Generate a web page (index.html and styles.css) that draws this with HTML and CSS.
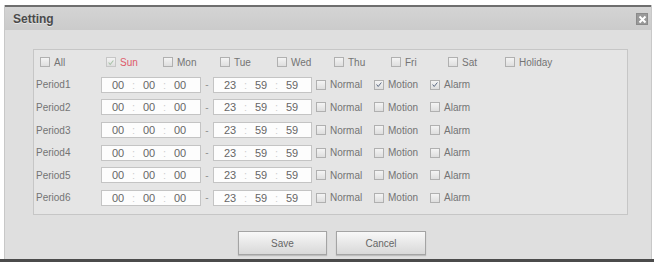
FILE: index.html
```html
<!DOCTYPE html>
<html lang="en">
<head>
    <meta charset="UTF-8">
    <title>Setting</title>
    <link rel="stylesheet" href="styles.css">
</head>
<body>

    <div class="top-strip"></div>

    <!-- Setting dialog -->
    <div class="dialog">
        <div class="dialog-head">
            <span class="dialog-title">Setting</span>
            <span class="dialog-close">
                <svg width="9" height="9" viewBox="0 0 9 9"><path d="M1.5 1.5 L7.5 7.5 M7.5 1.5 L1.5 7.5" stroke="#fff" stroke-width="2"/></svg>
            </span>
        </div>

        <div class="dialog-body">
            <div class="period-box">
                <div class="row days">
                    <label class="chk-item day all"><span class="chk"></span>All</label>
                    <label class="chk-item day sun"><span class="chk checked light"><svg viewBox="0 0 10 10"><path d="M2 5 L4 7.5 L8 2.5" fill="none" stroke="#a6c0a6" stroke-width="1.3"/></svg></span>Sun</label>
                    <label class="chk-item day"><span class="chk"></span>Mon</label>
                    <label class="chk-item day"><span class="chk"></span>Tue</label>
                    <label class="chk-item day"><span class="chk"></span>Wed</label>
                    <label class="chk-item day"><span class="chk"></span>Thu</label>
                    <label class="chk-item day"><span class="chk"></span>Fri</label>
                    <label class="chk-item day"><span class="chk"></span>Sat</label>
                    <label class="chk-item day"><span class="chk"></span>Holiday</label>
                </div>

                <div class="row period">
                    <span class="period-name">Period1</span>
                    <div class="time-box"><span class="seg">00</span><span class="colon">:</span><span class="seg">00</span><span class="colon">:</span><span class="seg">00</span></div>
                    <span class="dash">-</span>
                    <div class="time-box"><span class="seg">23</span><span class="colon">:</span><span class="seg">59</span><span class="colon">:</span><span class="seg">59</span></div>
                    <label class="chk-item normal"><span class="chk"></span>Normal</label>
                    <label class="chk-item motion"><span class="chk checked"><svg viewBox="0 0 10 10"><path d="M2 5 L4 7.5 L8 2.5" fill="none" stroke="#55647e" stroke-width="1.2"/></svg></span>Motion</label>
                    <label class="chk-item"><span class="chk checked"><svg viewBox="0 0 10 10"><path d="M2 5 L4 7.5 L8 2.5" fill="none" stroke="#55647e" stroke-width="1.2"/></svg></span>Alarm</label>
                </div>

                <div class="row period">
                    <span class="period-name">Period2</span>
                    <div class="time-box"><span class="seg">00</span><span class="colon">:</span><span class="seg">00</span><span class="colon">:</span><span class="seg">00</span></div>
                    <span class="dash">-</span>
                    <div class="time-box"><span class="seg">23</span><span class="colon">:</span><span class="seg">59</span><span class="colon">:</span><span class="seg">59</span></div>
                    <label class="chk-item normal"><span class="chk"></span>Normal</label>
                    <label class="chk-item motion"><span class="chk"></span>Motion</label>
                    <label class="chk-item"><span class="chk"></span>Alarm</label>
                </div>

                <div class="row period">
                    <span class="period-name">Period3</span>
                    <div class="time-box"><span class="seg">00</span><span class="colon">:</span><span class="seg">00</span><span class="colon">:</span><span class="seg">00</span></div>
                    <span class="dash">-</span>
                    <div class="time-box"><span class="seg">23</span><span class="colon">:</span><span class="seg">59</span><span class="colon">:</span><span class="seg">59</span></div>
                    <label class="chk-item normal"><span class="chk"></span>Normal</label>
                    <label class="chk-item motion"><span class="chk"></span>Motion</label>
                    <label class="chk-item"><span class="chk"></span>Alarm</label>
                </div>

                <div class="row period">
                    <span class="period-name">Period4</span>
                    <div class="time-box"><span class="seg">00</span><span class="colon">:</span><span class="seg">00</span><span class="colon">:</span><span class="seg">00</span></div>
                    <span class="dash">-</span>
                    <div class="time-box"><span class="seg">23</span><span class="colon">:</span><span class="seg">59</span><span class="colon">:</span><span class="seg">59</span></div>
                    <label class="chk-item normal"><span class="chk"></span>Normal</label>
                    <label class="chk-item motion"><span class="chk"></span>Motion</label>
                    <label class="chk-item"><span class="chk"></span>Alarm</label>
                </div>

                <div class="row period">
                    <span class="period-name">Period5</span>
                    <div class="time-box"><span class="seg">00</span><span class="colon">:</span><span class="seg">00</span><span class="colon">:</span><span class="seg">00</span></div>
                    <span class="dash">-</span>
                    <div class="time-box"><span class="seg">23</span><span class="colon">:</span><span class="seg">59</span><span class="colon">:</span><span class="seg">59</span></div>
                    <label class="chk-item normal"><span class="chk"></span>Normal</label>
                    <label class="chk-item motion"><span class="chk"></span>Motion</label>
                    <label class="chk-item"><span class="chk"></span>Alarm</label>
                </div>

                <div class="row period">
                    <span class="period-name">Period6</span>
                    <div class="time-box"><span class="seg">00</span><span class="colon">:</span><span class="seg">00</span><span class="colon">:</span><span class="seg">00</span></div>
                    <span class="dash">-</span>
                    <div class="time-box"><span class="seg">23</span><span class="colon">:</span><span class="seg">59</span><span class="colon">:</span><span class="seg">59</span></div>
                    <label class="chk-item normal"><span class="chk"></span>Normal</label>
                    <label class="chk-item motion"><span class="chk"></span>Motion</label>
                    <label class="chk-item"><span class="chk"></span>Alarm</label>
                </div>
            </div>

            <!-- Buttons -->
            <div class="btn-bar">
                <button class="btn save">Save</button>
                <button class="btn cancel">Cancel</button>
            </div>
        </div>
    </div>

    <div class="page-bottom"></div>

</body>
</html>
```

FILE: styles.css
```css
* {
    margin: 0;
    padding: 0;
    box-sizing: border-box;
}

body {
    font-family: "Liberation Sans", Arial, sans-serif;
    font-size: 10px;
    color: #747474;
    background: #fff;
    width: 654px;
    height: 262px;
    overflow: hidden;
    display: flex;
    flex-direction: column;
}

.top-strip {
    height: 5px;
}

/* Dialog */
.dialog {
    margin: 0 2px 0 4px;
    border-left: 1px solid #c8c8c8;
    border-right: 1px solid #c8c8c8;
    background: #dfdfdf;
}

.dialog-head {
    height: 25px;
    border-top: 2px solid #6e6e6e;
    background: linear-gradient(#d4d4d4, #cbcbcb);
    display: flex;
    align-items: center;
    justify-content: space-between;
    padding: 0 3px 0 8px;
}

.dialog-title {
    font-size: 12px;
    font-weight: bold;
    color: #4a4a4a;
    text-shadow: 0 1px 0 #e6e6e6;
}

.dialog-close {
    width: 12px;
    height: 12px;
    background: #999;
    border: 1px solid #8a8a8a;
    display: flex;
    align-items: center;
    justify-content: center;
    margin-top: 1px;
}

.dialog-body {
    padding: 19px 0 4px 0;
}

/* Period box */
.period-box {
    margin: 0 23px 0 28px;
    border: 1px solid #c6c6c6;
    background: #e5e5e5;
    padding: 1px 0 5px 2px;
}

.row {
    height: 22.6px;
    display: flex;
    align-items: center;
}

.days {
    padding-left: 4px;
}

.chk-item {
    display: flex;
    align-items: center;
    white-space: nowrap;
}

.chk {
    width: 10px;
    height: 10px;
    border: 1px solid #b0b0b0;
    background: linear-gradient(#f4f4f4, #dedede);
    margin-right: 4px;
    display: flex;
    align-items: center;
    justify-content: center;
}

.chk svg {
    width: 9px;
    height: 9px;
}

.chk.light {
    border-color: #c6c6c6;
}

.day {
    width: 57px;
}

.day.all {
    width: 66px;
}

.day.sun {
    color: #de5a6a;
}

.period-name {
    width: 65px;
}

.time-box {
    width: 100px;
    height: 16px;
    border: 1px solid #c4c4c4;
    background: #fdfdfd;
    display: flex;
    align-items: center;
    padding-left: 4px;
    color: #666;
    font-size: 11px;
}

.time-box + .dash + .time-box {
    width: 99px;
}

.seg {
    width: 24px;
    text-align: center;
}

.colon {
    width: 7px;
    text-align: center;
    color: #cfcfcf;
}

.dash {
    width: 12px;
    text-align: center;
    color: #909090;
}

.normal {
    margin-left: 4px;
    width: 58px;
}

.motion {
    width: 56px;
}

/* Buttons */
.btn-bar {
    display: flex;
    justify-content: center;
    gap: 9px;
    margin-top: 16px;
    padding-left: 8px;
}

.btn {
    width: 89px;
    height: 24px;
    border: 1px solid #a4a4a4;
    background: linear-gradient(#f8f8f8, #d8d8d8);
    color: #666;
    font-family: "Liberation Sans", Arial, sans-serif;
    font-size: 10px;
    box-shadow: 0 1px 1px rgba(0, 0, 0, 0.15);
}

.btn.cancel {
    width: 90px;
}

.page-bottom {
    flex: 1;
    background: #4b4b4b;
}
```
